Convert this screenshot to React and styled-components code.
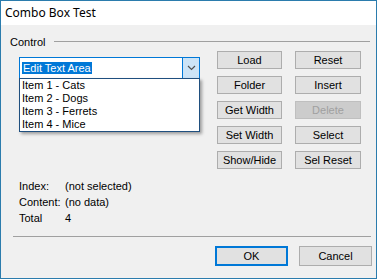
import React from "react"
import styled, { createGlobalStyle } from "styled-components"

const GlobalStyle = createGlobalStyle`
    html, body {
        margin: 0;
        padding: 0;
        background: #f0f0f0;
    }
    * {
        box-sizing: border-box;
    }
`

const Window = styled.div`
    width: 377px;
    height: 279px;
    border: 1px solid #2b7cad;
    background: #f0f0f0;
    display: flex;
    flex-direction: column;
    font-family: 'Liberation Sans', Arial, sans-serif;
    font-size: 11px;
    color: #000;
    overflow: hidden;
`

const TitleBar = styled.div`
    height: 24px;
    flex-shrink: 0;
    background: #fff;
    display: flex;
    align-items: center;
    padding-left: 4px;
    padding-bottom: 1px;
    font-family: 'Noto Sans', 'Open Sans', sans-serif;
    font-size: 12px;
`

const GroupHeader = styled.div`
    margin-top: 10px;
    height: 13px;
    display: flex;
    align-items: center;
    padding: 0 6px 0 9px;
`

const Rule = styled.div`
    flex: 1;
    height: 1px;
    background: #a0a0a0;
    margin-left: ${p => p.offset || 0}px;
`

const Main = styled.div`
    margin-top: 3px;
    display: flex;
    padding-left: 18px;
`

const ComboWrap = styled.div`
    position: relative;
    margin-top: 6px;
    width: 181px;
    height: 22px;
`

const Combo = styled.div`
    width: 100%;
    height: 100%;
    border: 1px solid #0078d7;
    background: #fff;
    display: flex;
`

const EditArea = styled.div`
    flex: 1;
    display: flex;
    align-items: center;
    padding-left: 2px;
`

const Selected = styled.span`
    background: #0078d7;
    color: #fff;
    line-height: 12px;
    padding: 0 1px;
`

const DropButton = styled.div`
    width: 17px;
    background: #cce4f7;
    border-left: 1px solid #0078d7;
    display: flex;
    align-items: center;
    justify-content: center;
`

const List = styled.div`
    position: absolute;
    top: 21px;
    left: 0;
    width: 181px;
    border: 1px solid #1f4f7f;
    background: #fff;
    box-shadow: 2px 2px 3px rgba(0, 0, 0, 0.35);
    z-index: 2;
`

const ListItem = styled.div`
    height: 13px;
    line-height: 13px;
    padding-left: 2px;
`

const ButtonGrid = styled.div`
    margin-left: 17px;
    display: grid;
    grid-template-columns: 65px 66px;
    grid-auto-rows: 18px;
    column-gap: 13px;
    row-gap: 7px;
`

const Button = styled.button`
    font-family: 'Liberation Sans', Arial, sans-serif;
    font-size: 11px;
    color: ${p => (p.disabled ? '#a0a0a0' : '#000')};
    background: ${p => (p.disabled ? '#cccccc' : '#e1e1e1')};
    border: ${p => (p.primary ? '2px solid #0078d7' : `1px solid ${p.disabled ? '#bfbfbf' : '#adadad'}`)};
    border-radius: 0;
    padding: 0;
    margin: 0;
    width: ${p => (p.wide ? '73px' : '100%')};
    height: ${p => (p.wide ? '20px' : '100%')};
`

const Info = styled.div`
    margin-top: 9px;
    padding-left: 18px;
    display: grid;
    grid-template-columns: 46px auto;
    grid-auto-rows: 16px;
    align-items: center;
`

const Separator = styled.div`
    margin: 10px 5px 0 12px;
    height: 1px;
    background: #a0a0a0;
`

const Footer = styled.div`
    margin-top: 9px;
    display: flex;
    justify-content: flex-end;
    gap: 11px;
    padding-right: 4px;
`

const Chevron = () => (
    <svg width="9" height="6" viewBox="0 0 9 6">
        <path d="M1 1 L4.5 4.5 L8 1" fill="none" stroke="#505050" strokeWidth="1.2" />
    </svg>
)

const items = ['Item 1 - Cats', 'Item 2 - Dogs', 'Item 3 - Ferrets', 'Item 4 - Mice']

const buttons = [
    ['Load', 'Reset'],
    ['Folder', 'Insert'],
    ['Get Width', 'Delete'],
    ['Set Width', 'Select'],
    ['Show/Hide', 'Sel Reset'],
]

const info = [
    ['Index:', '(not selected)'],
    ['Content:', '(no data)'],
    ['Total', '4'],
]

export default function App() {
    return (
        <>
            <GlobalStyle />
            <Window>
                <TitleBar>Combo Box Test</TitleBar>
                <GroupHeader>
                    Control
                    <Rule offset={9} />
                </GroupHeader>
                <Main>
                    <ComboWrap>
                        <Combo>
                            <EditArea>
                                <Selected>Edit Text Area</Selected>
                            </EditArea>
                            <DropButton>
                                <Chevron />
                            </DropButton>
                        </Combo>
                        <List>
                            {items.map(item => (
                                <ListItem key={item}>{item}</ListItem>
                            ))}
                        </List>
                    </ComboWrap>
                    <ButtonGrid>
                        {buttons.flat().map(label => (
                            <Button key={label} disabled={label === 'Delete'}>
                                {label}
                            </Button>
                        ))}
                    </ButtonGrid>
                </Main>
                <Info>
                    {info.map(([k, v]) => (
                        <React.Fragment key={k}>
                            <span>{k}</span>
                            <span>{v}</span>
                        </React.Fragment>
                    ))}
                </Info>
                <Separator />
                <Footer>
                    <Button wide primary>OK</Button>
                    <Button wide>Cancel</Button>
                </Footer>
            </Window>
        </>
    )
}
